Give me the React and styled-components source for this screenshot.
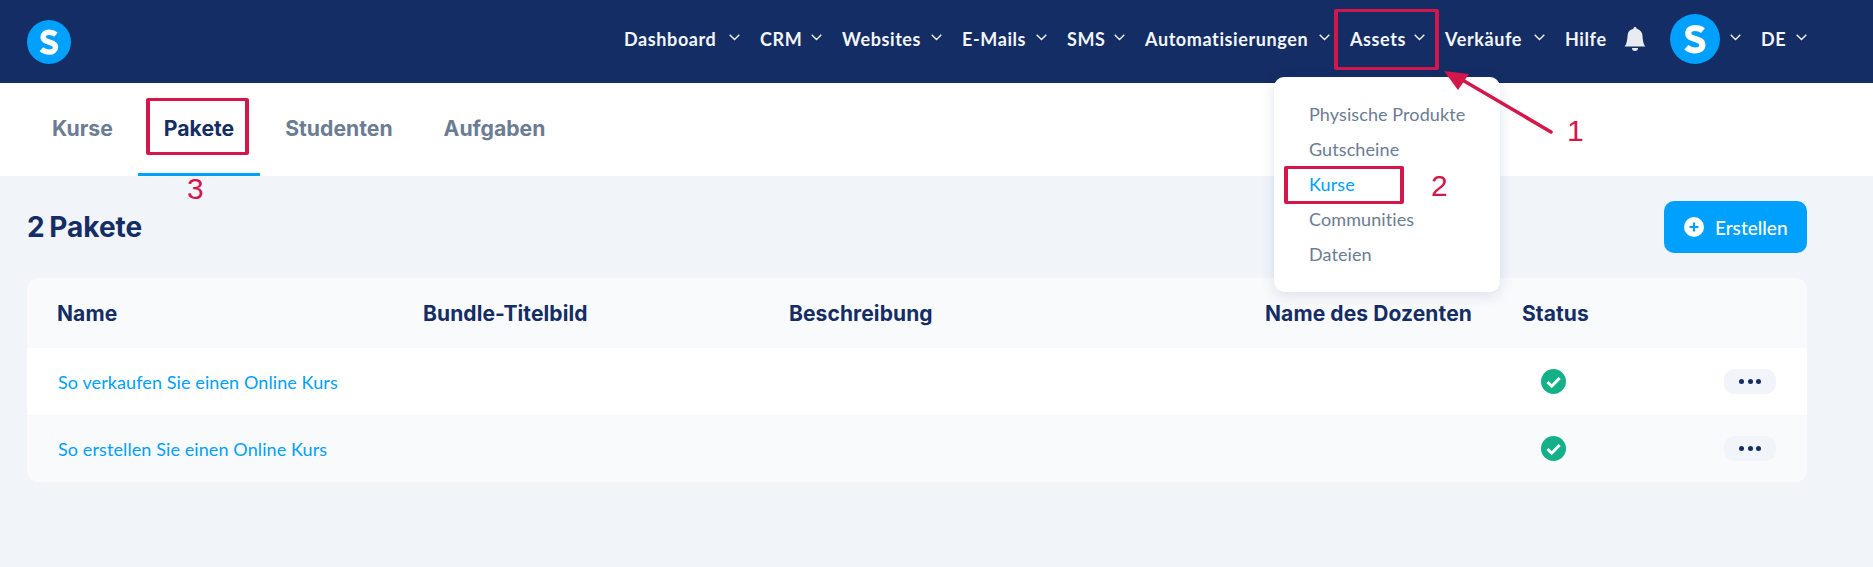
import React from 'react';
import styled, { createGlobalStyle } from 'styled-components';
import { BsBellFill } from 'react-icons/bs';

const GlobalStyle = createGlobalStyle`
  html, body {
    margin: 0;
    padding: 0;
    background: #f1f4f9;
    overflow: hidden;
  }
  * {
    box-sizing: border-box;
  }
`;

const navItems = [
  { label: 'Dashboard', width: 94 },
  { label: 'CRM', width: 40 },
  { label: 'Websites', width: 78 },
  { label: 'E-Mails', width: 63 },
  { label: 'SMS', width: 36 },
  { label: 'Automatisierungen', width: 163 },
  { label: 'Assets', width: 53 },
  { label: 'Verkäufe', width: 78 },
];

const menuItems = ['Physische Produkte', 'Gutscheine', 'Kurse', 'Communities', 'Dateien'];

const rows = ['So verkaufen Sie einen Online Kurs', 'So erstellen Sie einen Online Kurs'];

function Chevron() {
  return (
    <ChevronIcon viewBox="0 0 11 7">
      <polyline points="0.7,0.8 5.5,5.6 10.3,0.8" fill="none" stroke="currentColor" strokeWidth="1.4" />
    </ChevronIcon>
  );
}

function Logo({ size }) {
  return (
    <svg width={size} height={size} viewBox="0 0 44 44">
      <circle cx="22" cy="22" r="22" fill="#00a0ff" />
      <path
        d="M29 14.6c-1.9-1.5-4.3-2.3-6.9-2.3-3.6 0-6 1.9-6 4.8 0 6.4 12.4 3.5 12.4 10.1 0 3-2.7 4.9-6.5 4.9-3 0-5.6-1-7.6-2.8"
        fill="none"
        stroke="#fff"
        strokeWidth="5.4"
      />
    </svg>
  );
}

function App() {
  return (
    <Page>
      <GlobalStyle />
      <Header>
        <Logo size={44} />
        <Nav>
          {navItems.map((item) => (
            <NavItem key={item.label}>
              <NavLabel $width={item.width}>{item.label}</NavLabel>
              <Chevron />
            </NavItem>
          ))}
          <NavLabel $width={40}>Hilfe</NavLabel>
          <Bell>
            <BsBellFill />
          </Bell>
          <AvatarItem>
            <Logo size={50} />
            <Chevron />
          </AvatarItem>
          <NavItem>
            <NavLabel $width={24}>DE</NavLabel>
            <Chevron />
          </NavItem>
        </Nav>
      </Header>

      <Tabs>
        <Tab>Kurse</Tab>
        <Tab $active>Pakete</Tab>
        <Tab>Studenten</Tab>
        <Tab>Aufgaben</Tab>
      </Tabs>

      <Content>
        <TitleRow>
          <Title>2 Pakete</Title>
          <CreateButton>
            <svg width="20" height="20" viewBox="0 0 20 20">
              <circle cx="10" cy="10" r="10" fill="#fff" />
              <path d="M10 5.5v9M5.5 10h9" stroke="#00a0ff" strokeWidth="2.2" />
            </svg>
            Erstellen
          </CreateButton>
        </TitleRow>

        <Table>
          <HeadRow>
            <HeadCell>Name</HeadCell>
            <HeadCell>Bundle-Titelbild</HeadCell>
            <HeadCell>Beschreibung</HeadCell>
            <HeadCell>Name des Dozenten</HeadCell>
            <HeadCell>Status</HeadCell>
          </HeadRow>
          {rows.map((name, i) => (
            <Row key={name} $alt={i % 2 === 1}>
              <RowLink>{name}</RowLink>
              <span />
              <span />
              <span />
              <StatusCell>
                <svg width="25" height="25" viewBox="0 0 25 25">
                  <circle cx="12.5" cy="12.5" r="12.5" fill="#14b087" />
                  <path d="M6.5 13l4.2 4.2 8-8.2" fill="none" stroke="#fff" strokeWidth="3" />
                </svg>
              </StatusCell>
              <MoreButton>
                <Dot />
                <Dot />
                <Dot />
              </MoreButton>
            </Row>
          ))}
        </Table>
      </Content>

      <Dropdown>
        {menuItems.map((item) => (
          <MenuItem key={item} $active={item === 'Kurse'}>
            {item}
          </MenuItem>
        ))}
      </Dropdown>

      <RedBox $left={1334} $top={9} $width={105} $height={61} />
      <RedBox $left={1284} $top={166} $width={120} $height={38} />
      <RedBox $left={146} $top={98} $width={103} $height={57} />
      <Marker $left={1567} $top={114}>1</Marker>
      <Marker $left={1431} $top={169}>2</Marker>
      <Marker $left={187} $top={172}>3</Marker>
      <Arrow viewBox="0 0 120 70">
        <path d="M108 62L16 8" stroke="#d3174b" strokeWidth="3.5" strokeLinecap="round" />
        <path d="M1 1L26 4L15 20Z" fill="#d3174b" />
      </Arrow>
    </Page>
  );
}

const Page = styled.div`
  position: relative;
  width: 1873px;
  height: 567px;
  overflow: hidden;
  background: #f1f4f9;
`;

const Header = styled.header`
  display: flex;
  align-items: center;
  justify-content: space-between;
  height: 83px;
  padding: 0 66px 0 27px;
  background: #142d64;
`;

const Nav = styled.nav`
  display: flex;
  align-items: center;
  gap: 20px;
  font-family: 'Lato', sans-serif;
  font-size: 18px;
  font-weight: 700;
  letter-spacing: 0.6px;
  color: #f3f5f8;
  margin-top: -6px;
`;

const NavItem = styled.div`
  display: flex;
  align-items: center;
  gap: 11px;
`;

const AvatarItem = styled(NavItem)`
  gap: 10px;
`;

const NavLabel = styled.span`
  width: ${(p) => p.$width}px;
  white-space: nowrap;
`;

const ChevronIcon = styled.svg`
  flex-shrink: 0;
  width: 11px;
  height: 7px;
  margin-top: -2px;
`;

const Bell = styled.div`
  display: flex;
  justify-content: center;
  width: 20px;
  margin-right: 5px;
  color: #e8ebf0;

  svg {
    flex-shrink: 0;
    width: 24px;
    height: 24px;
  }
`;

const Tabs = styled.div`
  display: flex;
  height: 93px;
  padding-left: 26px;
  background: #fff;
`;

const Tab = styled.div`
  display: flex;
  align-items: center;
  height: 93px;
  margin-right: -1px;
  padding: 0 26px;
  font-family: 'Inter', sans-serif;
  font-size: 21.2px;
  font-weight: 700;
  color: ${(p) => (p.$active ? '#142d64' : '#6b7c93')};
  border-bottom: 3px solid ${(p) => (p.$active ? '#00a0ff' : 'transparent')};
`;

const Content = styled.main`
  padding: 25px 66px 0 27px;
`;

const TitleRow = styled.div`
  display: flex;
  align-items: center;
  justify-content: space-between;
  height: 52px;
  margin-bottom: 25px;
`;

const Title = styled.h1`
  margin: 0;
  font-family: 'Inter', sans-serif;
  font-size: 28px;
  font-weight: 700;
  word-spacing: -2px;
  color: #142d64;
`;

const CreateButton = styled.button`
  display: flex;
  align-items: center;
  gap: 11px;
  width: 143px;
  height: 52px;
  padding: 0 0 0 20px;
  border: none;
  border-radius: 10px;
  background: #00a0ff;
  color: #fff;
  font-family: 'Lato', sans-serif;
  font-size: 19px;
  font-weight: 500;
`;

const Table = styled.div`
  overflow: hidden;
  border-radius: 12px;
  background: #f9fafc;
`;

const columns = '366px 366px 476px 257px 202px 52px';

const HeadRow = styled.div`
  display: grid;
  grid-template-columns: ${columns};
  align-items: center;
  height: 70px;
  padding-left: 30px;
`;

const HeadCell = styled.div`
  font-family: 'Inter', sans-serif;
  font-size: 21px;
  font-weight: 700;
  letter-spacing: 0.1px;
  color: #142d64;
  white-space: nowrap;
`;

const Row = styled.div`
  display: grid;
  grid-template-columns: ${columns};
  align-items: center;
  height: 67px;
  padding-left: 31px;
  background: ${(p) => (p.$alt ? '#f9fafc' : '#fff')};
`;

const RowLink = styled.a`
  font-family: 'Lato', sans-serif;
  font-size: 18px;
  letter-spacing: 0.1px;
  color: #00a0ff;
  white-space: nowrap;
`;

const StatusCell = styled.div`
  display: flex;
  padding-left: 18px;
`;

const MoreButton = styled.div`
  display: flex;
  align-items: center;
  justify-content: center;
  gap: 3.5px;
  width: 52px;
  height: 25px;
  margin-left: -1px;
  border-radius: 10px;
  background: #f1f4f9;
`;

const Dot = styled.span`
  width: 5px;
  height: 5px;
  border-radius: 50%;
  background: #142d64;
`;

const Dropdown = styled.div`
  position: absolute;
  left: 1274px;
  top: 77px;
  display: flex;
  flex-direction: column;
  width: 226px;
  height: 215px;
  padding: 20px 0 0 35px;
  border-radius: 10px;
  background: #fff;
  box-shadow: 0 4px 14px rgba(20, 45, 100, 0.12);
`;

const MenuItem = styled.div`
  height: 35px;
  line-height: 35px;
  font-family: 'Lato', sans-serif;
  font-size: 18px;
  letter-spacing: 0.1px;
  color: ${(p) => (p.$active ? '#00a0ff' : '#6b7c93')};
`;

const RedBox = styled.div`
  position: absolute;
  left: ${(p) => p.$left}px;
  top: ${(p) => p.$top}px;
  width: ${(p) => p.$width}px;
  height: ${(p) => p.$height}px;
  border: solid #d3174b;
  border-width: 3px 4px;
  border-radius: 2px;
`;

const Marker = styled.span`
  position: absolute;
  left: ${(p) => p.$left}px;
  top: ${(p) => p.$top}px;
  font-family: 'Liberation Sans', sans-serif;
  font-size: 30px;
  line-height: 34px;
  color: #d3174b;
`;

const Arrow = styled.svg`
  position: absolute;
  left: 1443px;
  top: 70px;
  width: 120px;
  height: 70px;
`;

export default App;
